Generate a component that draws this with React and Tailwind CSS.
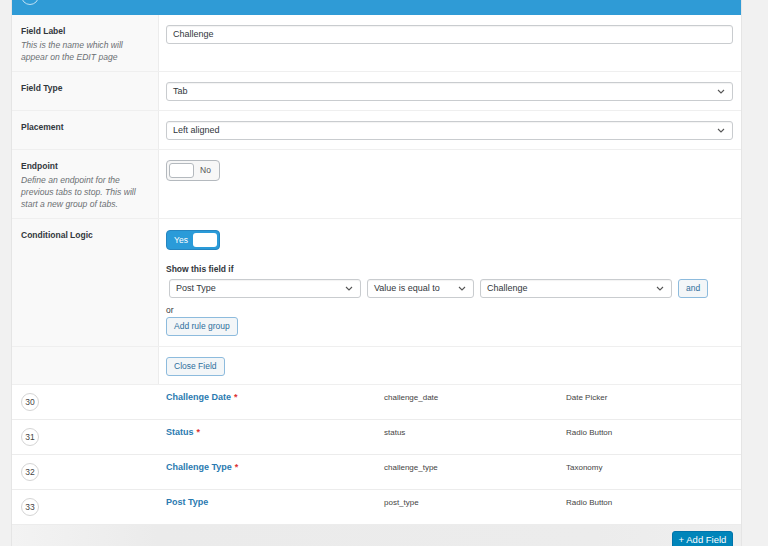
import React from "react";

const font = "font-['Liberation_Sans',Arial,sans-serif]";

function Chevron() {
  return (
    <svg width="8" height="5" viewBox="0 0 8 5" className="shrink-0">
      <path d="M1 1l3 3 3-3" fill="none" stroke="#555" strokeWidth="1.1" />
    </svg>
  );
}

function Select({ value, className = "" }) {
  return (
    <div className={`flex items-center justify-between h-[19px] px-[6px] pr-[7px] bg-white border border-[#c9cccf] rounded-[3px] shadow-[inset_0_1px_1px_rgba(0,0,0,0.05)] ${className}`}>
      <span className="text-[9px] text-[#32373c]">{value}</span>
      <Chevron />
    </div>
  );
}

function Btn({ children, className = "" }) {
  return (
    <div className={`flex w-fit items-center justify-center h-[19px] px-[7px] bg-[#f3f6f8] border border-[#8dbbdd] rounded-[3px] text-[8.5px] text-[#2d6e9c] ${className}`}>
      {children}
    </div>
  );
}

function Row({ h, label, desc, children }) {
  return (
    <div className={`flex border-b border-[#efefef] ${h}`}>
      <div className="w-[147px] shrink-0 bg-[#f9f9f9] border-r border-[#ececec] pl-[9px] pr-[4px] pt-[10px]">
        {label && <div className="text-[8.5px] font-bold text-[#32373c] leading-[12px]">{label}</div>}
        {desc && <div className="mt-[2px] text-[8.6px] italic text-[#6b6f73] leading-[12px]">{desc}</div>}
      </div>
      <div className="flex-1 pl-[7px] pr-[8px] pt-[10px]">{children}</div>
    </div>
  );
}

const fields = [
  { n: 30, name: "Challenge Date", req: true, key: "challenge_date", type: "Date Picker" },
  { n: 31, name: "Status", req: true, key: "status", type: "Radio Button" },
  { n: 32, name: "Challenge Type", req: true, key: "challenge_type", type: "Taxonomy" },
  { n: 33, name: "Post Type", req: false, key: "post_type", type: "Radio Button" },
];

export default function App() {
  return (
    <div className={`w-[768px] h-[546px] overflow-hidden bg-[#f1f1f1] ${font}`}>
      <div className="ml-[12px] w-[729px] bg-white shadow-[0_0_0_1px_#e5e5e5]">
        {/* open field header */}
        <div className="relative h-[15px] bg-[#2f9bd6] overflow-hidden">
          <div className="absolute left-[9px] top-[-13px] w-[18px] h-[18px] rounded-full border border-[#bfe0f3]" />
        </div>

        <Row h="h-[57px]" label="Field Label" desc={<>This is the name which will<br />appear on the EDIT page</>}>
          <div className="flex items-center h-[19px] px-[6px] bg-white border border-[#c9cccf] rounded-[3px] shadow-[inset_0_1px_1px_rgba(0,0,0,0.05)]">
            <span className="text-[9px] text-[#32373c]">Challenge</span>
          </div>
        </Row>

        <Row h="h-[39px]" label="Field Type">
          <Select value="Tab" />
        </Row>

        <Row h="h-[39px]" label="Placement">
          <Select value="Left aligned" />
        </Row>

        <Row h="h-[69px]" label="Endpoint" desc={<>Define an endpoint for the<br />previous tabs to stop. This will<br />start a new group of tabs.</>}>
          <div className="flex items-center w-[54px] h-[21px] p-[2px] bg-[#f7f7f7] border border-[#b4b9be] rounded-[4px]">
            <div className="w-[25px] h-full bg-white border border-[#b4b9be] rounded-[3px]" />
            <span className="flex-1 text-center text-[8.5px] text-[#555]">No</span>
          </div>
        </Row>

        <Row h="h-[128px]" label="Conditional Logic">
          <div className="mt-[1px] flex items-center w-[54px] h-[20px] p-[2px] bg-[#2a9bd9] border border-[#2585c0] rounded-[4px]">
            <span className="flex-1 text-center text-[8.5px] text-white">Yes</span>
            <div className="w-[24px] h-full bg-white rounded-[3px]" />
          </div>
          <div className="mt-[13px] text-[8.5px] font-bold text-[#32373c] leading-[12px]">Show this field if</div>
          <div className="mt-[4px] ml-[3px] flex items-center gap-[6px]">
            <Select value="Post Type" className="w-[192px]" />
            <Select value="Value is equal to" className="w-[107px]" />
            <Select value="Challenge" className="w-[192px]" />
            <Btn className="w-[29px] px-0">and</Btn>
          </div>
          <div className="mt-[6px] text-[8.5px] text-[#32373c] leading-[12px]">or</div>
          <Btn className="mt-[1px]">Add rule group</Btn>
        </Row>

        <Row h="h-[38px]">
          <Btn>Close Field</Btn>
        </Row>

        {/* field list */}
        {fields.map((f) => (
          <div key={f.n} className="flex h-[35px] border-b border-[#ececec]">
            <div className="w-[147px] shrink-0 pl-[9px] flex items-center">
              <div className="w-[18px] h-[18px] rounded-full border border-[#d5d5d5] bg-white flex items-center justify-center text-[8.5px] text-[#444]">
                {f.n}
              </div>
            </div>
            <div className="w-[225px] shrink-0 pl-[7px] pt-[6px] text-[9px] font-bold text-[#2a7ab0]">
              {f.name}
              {f.req && <span className="ml-[3px] text-[#dc3232]">*</span>}
            </div>
            <div className="w-[182px] shrink-0 pt-[7px] text-[8px] text-[#444]">{f.key}</div>
            <div className="flex-1 pt-[7px] text-[8px] text-[#444]">{f.type}</div>
          </div>
        ))}

        {/* footer */}
        <div className="flex justify-end h-[30px] pt-[6px] pr-[8px] bg-[linear-gradient(90deg,#f3f3f3_0%,#ebebeb_20%,#ececec_80%,#efefef_100%)]">
          <div className="h-[24px] w-[61px] flex items-start justify-center pt-[2px] bg-[#0085ba] border border-[#0073aa] rounded-[3px] text-[9.5px] leading-[12px] text-white">
            + Add Field
          </div>
        </div>
      </div>
    </div>
  );
}
